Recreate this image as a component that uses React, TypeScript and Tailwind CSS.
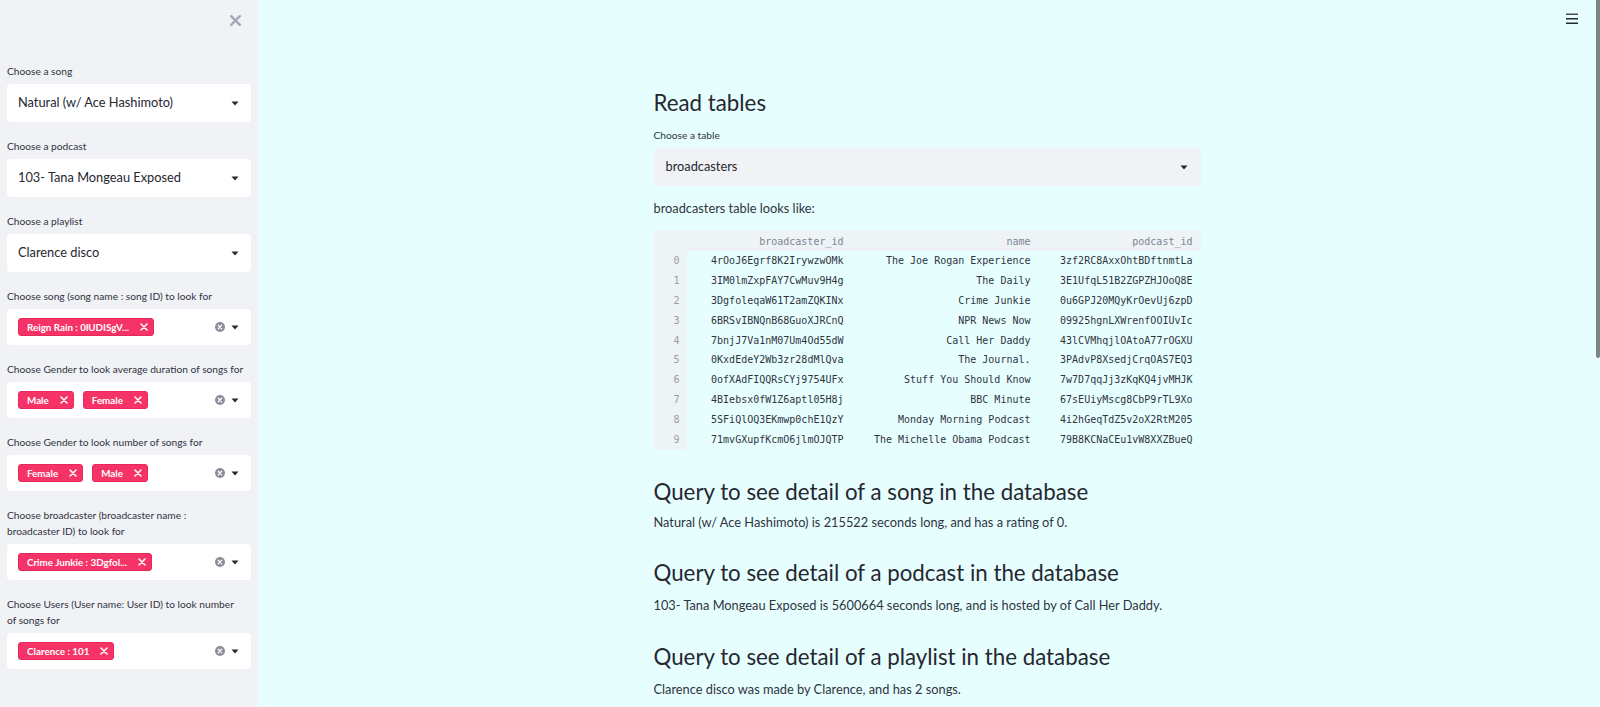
import React from "react";

const rows: [string, string, string][] = [
  ["4rOoJ6Egrf8K2IrywzwOMk", "The Joe Rogan Experience", "3zf2RC8AxxOhtBDftnmtLa"],
  ["3IM0lmZxpFAY7CwMuv9H4g", "The Daily", "3E1UfqL51B2ZGPZHJOoQ8E"],
  ["3DgfoleqaW61T2amZQKINx", "Crime Junkie", "0u6GPJ20MQyKrOevUj6zpD"],
  ["6BRSvIBNQnB68GuoXJRCnQ", "NPR News Now", "09925hgnLXWrenfOOIUvIc"],
  ["7bnjJ7Va1nM07Um4Od55dW", "Call Her Daddy", "43lCVMhqjlOAtoA77rOGXU"],
  ["0KxdEdeY2Wb3zr28dMlQva", "The Journal.", "3PAdvP8XsedjCrqOAS7EQ3"],
  ["0ofXAdFIQQRsCYj9754UFx", "Stuff You Should Know", "7w7D7qqJj3zKqKQ4jvMHJK"],
  ["4BIebsx0fW1Z6aptl05H8j", "BBC Minute", "67sEUiyMscg8CbP9rTL9Xo"],
  ["5SFiQlOQ3EKmwp0chE1QzY", "Monday Morning Podcast", "4i2hGeqTdZ5v2oX2RtM205"],
  ["71mvGXupfKcmO6jlmOJQTP", "The Michelle Obama Podcast", "79B8KCNaCEu1vW8XXZBueQ"],
];

function Caret() {
  return (
    <svg width="8" height="5" viewBox="0 0 8 5" className="shrink-0">
      <path d="M0.5 0.5 L7.5 0.5 L4 4.5 Z" fill="#262730" />
    </svg>
  );
}

function ClearIcon() {
  return (
    <svg width="10" height="10" viewBox="0 0 10 10" className="shrink-0">
      <circle cx="5" cy="5" r="5" fill="#8b8e99" />
      <path d="M3.3 3.3 L6.7 6.7 M6.7 3.3 L3.3 6.7" stroke="#fff" strokeWidth="1.3" strokeLinecap="round" />
    </svg>
  );
}

function TagX() {
  return (
    <svg width="8" height="8" viewBox="0 0 8 8" className="shrink-0">
      <path d="M1 1 L7 7 M7 1 L1 7" stroke="#fff" strokeWidth="1.5" strokeLinecap="round" />
    </svg>
  );
}

function Label({ children }: { children: React.ReactNode }) {
  return <div className="text-[10.2px] leading-[16px] text-[#31333f]">{children}</div>;
}

function Select({ value }: { value: string }) {
  return (
    <div className="mt-[5px] h-[38px] rounded-[4px] bg-white flex items-center pl-[11px] pr-[12px]">
      <span className="flex-1 text-[12.8px] text-[#262730] truncate">{value}</span>
      <Caret />
    </div>
  );
}

function Tag({ text }: { text: string }) {
  return (
    <div className="h-[18px] rounded-[3px] bg-[#f63366] border border-[#e8285a] flex items-center pl-[8px] pr-[5px] gap-[11px]">
      <span className="text-[9.8px] font-bold text-white whitespace-nowrap">{text}</span>
      <TagX />
    </div>
  );
}

function Multi({ tags }: { tags: string[] }) {
  return (
    <div className="mt-[5px] h-[36px] rounded-[4px] bg-white flex items-center pl-[11px] pr-[12px]">
      <div className="flex-1 flex items-center gap-[9px]">
        {tags.map((t) => (
          <Tag key={t} text={t} />
        ))}
      </div>
      <div className="flex items-center gap-[6px]">
        <ClearIcon />
        <Caret />
      </div>
    </div>
  );
}

export default function App() {
  return (
    <div className="flex h-[707px] w-[1600px] overflow-hidden font-['Lato',sans-serif] text-[#262730]">
      {/* Sidebar */}
      <aside className="w-[258px] shrink-0 bg-[#f0f2f6] px-[7px] flex flex-col">
        <div className="h-[40px] flex items-center justify-end pr-[10px]">
          <svg width="11" height="11" viewBox="0 0 11 11">
            <path d="M1.2 1.2 L9.8 9.8 M9.8 1.2 L1.2 9.8" stroke="#a3a8b4" strokeWidth="2.4" strokeLinecap="round" />
          </svg>
        </div>
        <div className="mt-[23px] flex flex-col gap-[16px]">
          <div>
            <Label>Choose a song</Label>
            <Select value="Natural (w/ Ace Hashimoto)" />
          </div>
          <div>
            <Label>Choose a podcast</Label>
            <Select value="103- Tana Mongeau Exposed" />
          </div>
          <div>
            <Label>Choose a playlist</Label>
            <Select value="Clarence disco" />
          </div>
          <div>
            <Label>Choose song (song name : song ID) to look for</Label>
            <Multi tags={["Reign Rain : 0lUDISgV..."]} />
          </div>
          <div>
            <Label>Choose Gender to look average duration of songs for</Label>
            <Multi tags={["Male", "Female"]} />
          </div>
          <div>
            <Label>Choose Gender to look number of songs for</Label>
            <Multi tags={["Female", "Male"]} />
          </div>
          <div>
            <Label>
              Choose broadcaster (broadcaster name :<br />
              broadcaster ID) to look for
            </Label>
            <Multi tags={["Crime Junkie : 3Dgfol..."]} />
          </div>
          <div>
            <Label>
              Choose Users (User name: User ID) to look number
              <br />
              of songs for
            </Label>
            <Multi tags={["Clarence : 101"]} />
          </div>
        </div>
      </aside>

      {/* Main */}
      <main className="relative flex-1 bg-[#e6fffe] pr-[4px]">
        <div className="absolute right-[22px] top-[13px]">
          <svg width="12" height="11" viewBox="0 0 12 11">
            <rect x="0" y="0.5" width="12" height="1.5" fill="#4a4c55" />
            <rect x="0" y="5" width="12" height="1.5" fill="#262730" />
            <rect x="0" y="9.5" width="12" height="1.5" fill="#262730" />
          </svg>
        </div>
        <div className="absolute right-0 top-0 w-[4px] h-[358px] rounded-b-[2px] bg-[#7b8581]" />

        <div className="mx-auto w-[547px] pt-[89px]">
          <h2 className="text-[22.3px] leading-[28px] font-normal text-[#262730]">Read tables</h2>
          <div className="mt-[10px] text-[10.2px] leading-[16px] text-[#31333f]">Choose a table</div>
          <div className="mt-[5px] h-[38px] rounded-[4px] bg-[#f0f2f6] flex items-center pl-[12px] pr-[13px]">
            <span className="flex-1 text-[12.8px] text-[#262730]">broadcasters</span>
            <Caret />
          </div>
          <p className="mt-[12px] text-[12.8px] leading-[20px] text-[#31333f]">broadcasters table looks like:</p>

          <div className="mt-[13px] w-[547px] overflow-hidden font-['DejaVu_Sans_Mono',monospace] text-[10px]">
            <div className="grid grid-cols-[33px_165px_187px_162px] h-[20px] items-center bg-[#eef3f5] text-[#808495]">
              <div />
              <div className="text-right pr-[8px]">broadcaster_id</div>
              <div className="text-right pr-[8px]">name</div>
              <div className="text-right pr-[8px] whitespace-nowrap">podcast_id</div>
            </div>
            {rows.map((r, i) => (
              <div key={i} className="grid grid-cols-[33px_165px_187px_162px] h-[19.8px] items-center text-[#31333f]">
                <div className="h-full flex items-center justify-end pr-[7px] bg-[#eef3f5] text-[#9a9ca6]">{i}</div>
                <div className="text-right pr-[8px] whitespace-nowrap">{r[0]}</div>
                <div className="text-right pr-[8px] whitespace-nowrap">{r[1]}</div>
                <div className="text-right pr-[8px] whitespace-nowrap">{r[2]}</div>
              </div>
            ))}
          </div>

          <h3 className="mt-[29px] text-[22.3px] leading-[28px] font-normal text-[#262730]">
            Query to see detail of a song in the database
          </h3>
          <p className="mt-[6px] text-[12.8px] leading-[20px] text-[#31333f]">
            Natural (w/ Ace Hashimoto) is 215522 seconds long, and has a rating of 0.
          </p>
          <h3 className="mt-[27px] text-[22.3px] leading-[28px] font-normal text-[#262730]">
            Query to see detail of a podcast in the database
          </h3>
          <p className="mt-[8px] text-[12.8px] leading-[20px] text-[#31333f]">
            103- Tana Mongeau Exposed is 5600664 seconds long, and is hosted by of Call Her Daddy.
          </p>
          <h3 className="mt-[28px] text-[22.3px] leading-[28px] font-normal text-[#262730]">
            Query to see detail of a playlist in the database
          </h3>
          <p className="mt-[8px] text-[12.8px] leading-[20px] text-[#31333f]">
            Clarence disco was made by Clarence, and has 2 songs.
          </p>
        </div>
      </main>
    </div>
  );
}
